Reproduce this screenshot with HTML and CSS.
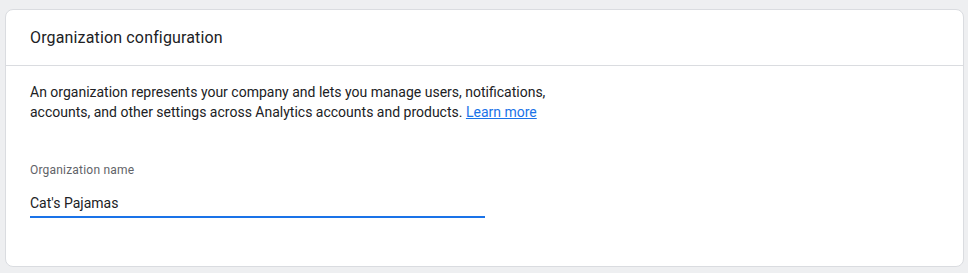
FILE: index.html
```html
<!DOCTYPE html>
<html lang="en">
<head>
    <meta charset="UTF-8">
    <title>Organization configuration</title>
    <link rel="stylesheet" href="styles.css">
</head>
<body>
    <div class="card">
        <div class="card-header">Organization configuration</div>
        <div class="card-body">
            <p class="intro">
                An organization represents your company and lets you manage users, notifications,<br>
                accounts, and other settings across Analytics accounts and products. <a href="#">Learn more</a>
            </p>
            <div class="field">
                <label class="field-label">Organization name</label>
                <div class="field-input">Cat's Pajamas</div>
            </div>
        </div>
    </div>
</body>
</html>
```

FILE: styles.css
```css
html, body {
    margin: 0;
    background: #eeeff1;
}
body {
    padding: 9px 4px 0 5px;
    font-family: Roboto, "Noto Sans", Arial, sans-serif;
    color: #202124;
}
.card {
    background: #fff;
    border: 1px solid #dadce0;
    border-radius: 8px;
    box-sizing: border-box;
    height: 258px;
}
.card-header {
    height: 55px;
    display: flex;
    align-items: center;
    padding: 0 24px;
    font-size: 16px;
    letter-spacing: 0.15px;
    border-bottom: 1px solid #dadce0;
}
.card-body {
    padding: 16px 24px;
}
.intro {
    margin: 0;
    font-size: 14px;
    line-height: 20px;
}
.intro a {
    color: #1a73e8;
}
.field {
    margin-top: 40px;
    width: 455px;
}
.field-label {
    display: block;
    font-size: 12px;
    line-height: 16px;
    color: #5f6368;
    letter-spacing: 0.2px;
}
.field-input {
    margin-top: 15px;
    font-size: 14px;
    line-height: 20px;
    padding-bottom: 3px;
    border-bottom: 2px solid #1a73e8;
}
```
